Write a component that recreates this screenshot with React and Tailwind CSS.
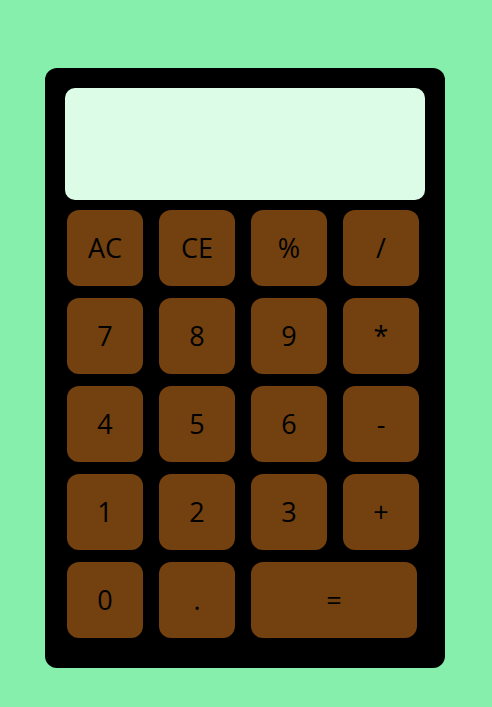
import React from 'react';

const keys = [
    'AC', 'CE', '%', '/',
    '7', '8', '9', '*',
    '4', '5', '6', '-',
    '1', '2', '3', '+',
    '0', '.', '=',
];

const App = () => {
    return (
        <div className="min-h-screen w-full bg-[#86efac] pt-[68px] pl-[45px]" style={{ fontFamily: '"Open Sans", "Noto Sans", sans-serif' }}>
            <div className="w-[400px] h-[600px] bg-black rounded-[12px] pt-[20px] px-[20px]">
                {/* Display */}
                <div className="w-[360px] h-[112px] bg-[#dcfce7] rounded-[10px]"></div>

                {/* Keypad */}
                <div className="mt-[10px] ml-[2px] grid grid-cols-[76px_76px_76px_76px] gap-x-[16px] gap-y-[12px]">
                    {keys.map(k => (
                        <button
                            key={k}
                            className={`h-[76px] bg-[#72410f] rounded-[12px] text-black text-[27px] font-normal flex items-center justify-center ${k === '=' ? 'col-span-2 w-[166px]' : 'w-[76px]'}`}>
                            {k}
                        </button>
                    ))}
                </div>
            </div>
        </div>
    );
};

export default App;
